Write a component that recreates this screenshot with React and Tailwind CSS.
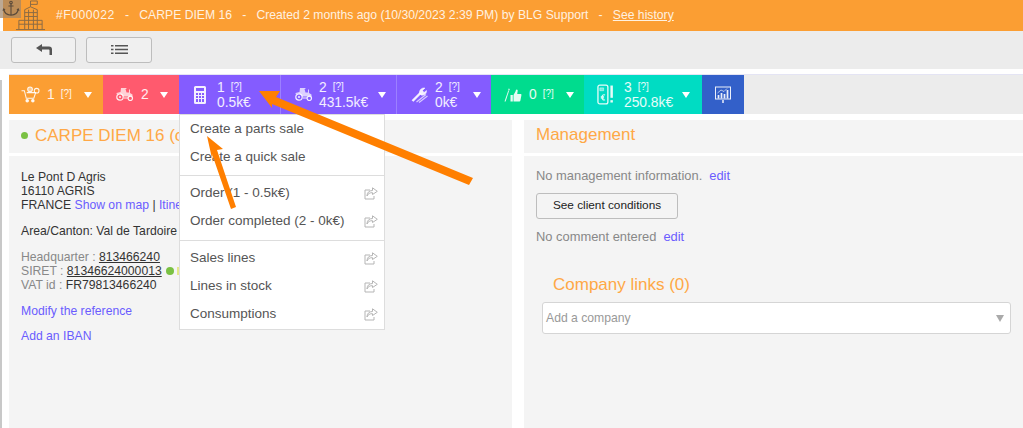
import { Fragment } from 'react'

const Building = ({ className }) => (
  <svg viewBox="0 0 32 32" fill="none" stroke="currentColor" strokeWidth="1" className={className}>
    <path d="M1 30.500h30M4 30V21h6M28 30V21h-5M10 30V10l6-3 7 3v20M10 13h13M10 17h13M10 21h13M10 25h13M14 10v20M19 10v20M4 25h6M23 25h5M16 7V1h7v3.500h-7" />
  </svg>
)

const Anchor = ({ className }) => (
  <svg viewBox="0 0 20 20" fill="none" stroke="currentColor" strokeWidth="1.300" className={className}>
    <circle cx="10" cy="3" r="1.500" />
    <path d="M10 4.500V18M7 7h6M1.500 11c.5 4 4 6.500 8.500 7 4.500-.5 8-3 8.500-7M.5 12.500l1-2 1.500 1.500M19.500 12.500l-1-2-1.500 1.500" />
  </svg>
)

const Cart = () => (
  <svg viewBox="0 0 20 18" fill="none" stroke="currentColor" strokeWidth="1.100" className="w-[19px] h-[17px]">
    <path d="M0.500 5h3l2 8h8l2-6H6" />
    <circle cx="6.500" cy="15.500" r="1.300" fill="currentColor" />
    <circle cx="12.500" cy="15.500" r="1.300" fill="currentColor" />
    <circle cx="9.500" cy="3.500" r="2.500" fill="currentColor" fillOpacity="0.500" />
    <circle cx="16.500" cy="5" r="2.500" />
  </svg>
)

const Tractor = () => (
  <svg viewBox="0 0 18 13" fill="currentColor" className="w-[18px] h-[13px]">
    <path d="M5 0h5l.8 1H9.500l1 3.500H13V1.500h1V5l2.500 1.500V8.500H7A3.800 3.800 0 0 0 .8 6.500L.5 5l4-1z" fillOpacity="0.800" />
    <circle cx="4" cy="9" r="3.200" fill="none" stroke="currentColor" strokeWidth="1.200" />
    <circle cx="4" cy="9" r="1" />
    <circle cx="14.300" cy="10.300" r="2.200" fill="none" stroke="currentColor" strokeWidth="1.200" />
    <path d="M8 9.500h4v1H8z" />
  </svg>
)

const Calculator = () => (
  <svg viewBox="0 0 12 18" className="w-[12px] h-[18px]" fill="currentColor">
    <path fillRule="evenodd" d="M1.500 0h9A1.500 1.500 0 0 1 12 1.500v15a1.500 1.500 0 0 1-1.500 1.500h-9A1.500 1.500 0 0 1 0 16.500v-15A1.500 1.500 0 0 1 1.500 0zM2 2v3h8V2zM2 7v2h2V7zm3 0v2h2V7zm3 0v2h2V7zM2 10v2h2v-2zm3 0v2h2v-2zm3 0v2h2v-2zM2 13v3h2v-3zm3 0v3h2v-3zm3 0v3h2v-3z" />
  </svg>
)

const Tools = () => (
  <svg viewBox="0 0 18 16" fill="none" stroke="currentColor" className="w-[18px] h-[16px]">
    <path d="M1.500 14 9.500 6" strokeWidth="2.400" />
    <path d="M8.500 6.500C8 3 10.500.5 14 1l-2.500 2.500 1.500 2L15.500 3.500c.5 3-2.500 5.500-5.500 4.500z" fill="currentColor" strokeWidth="0.500" />
    <path d="M5.500 15 15 7.500M8 15.500 16.500 9" strokeWidth="1.200" strokeOpacity="0.750" />
  </svg>
)

const Thumb = () => (
  <svg viewBox="0 0 18 14" fill="currentColor" className="w-[18px] h-[14px]">
    <path d="M0.500 13.500 4.300 2.500l.8.300L1.600 13.500z" />
    <path d="M4.600 0.500 5.800 1 5.300 2.600 4.300 2.200z" />
    <path d="M6.500 7h2.300v6.500H6.500zM9.500 7 11.500 3.500c.3-1 .4-2 1.200-2 1 0 1.200 1 .9 2.100L13.200 6H16.500c.8 0 1 .6.900 1.200L16.400 12.500c-.1.600-.5 1-1.100 1H9.500z" />
  </svg>
)

const Invoice = () => (
  <svg viewBox="0 0 18 22" fill="none" stroke="currentColor" className="w-[17px] h-[21px]">
    <rect x="1" y="1" width="10.500" height="20" rx="2" strokeWidth="1.400" />
    <path d="M3 4h4v3H3z" fill="currentColor" fillOpacity="0.500" strokeWidth="0.500" />
    <path d="M8.500 11.500c-2-.8-3.200.5-3.200 2.500s1.200 3.300 3.200 2.500M4 13.300h3.500M4 14.800h3.500" strokeWidth="1.100" />
    <path d="M15.500 1.500v13" strokeWidth="2.600" />
    <path d="M15.500 17v2.500" strokeWidth="2.600" />
  </svg>
)

const Chart = () => (
  <svg viewBox="0 0 16 18" fill="none" stroke="currentColor" className="w-[16px] h-[18px]">
    <rect x="0.500" y="1" width="15" height="12" strokeWidth="1" />
    <path d="M3.500 12.500V9M6.500 12.500V7M9.500 12.500V8M12.500 12.500V4" strokeWidth="1.700" />
    <path d="M2.500 7 6 4l3 1.500 3-3" strokeWidth="0.700" />
    <path d="M8 14v3" strokeWidth="1.500" />
  </svg>
)

const ShareIcon = () => (
  <svg viewBox="0 0 14 13" fill="none" stroke="#b5b5b5" strokeWidth="1" className="w-[14px] h-[13px]">
    <path d="M6 3H1v9h9V9" />
    <path d="M8.500 0.800 13.300 4.300 8.500 7.500V5.700C6 5.500 3.800 6.700 3 9c-.1-3.500 2.300-5.500 5.500-5.500z" fill="#ffffff" />
  </svg>
)

const Caret = () => (
  <span className="w-0 h-0 border-x-[4px] border-x-transparent border-t-[6px] border-t-white" />
)

const Help = () => <span className="text-[10px] ml-[6px] relative top-[-1px]">[?]</span>

const tabs = [
  { width: 'w-[94px]', color: 'bg-[#fb9e33]', pad: 'pl-[12px]', gap: 'gap-[7px]', icon: <Cart />, count: '1', help: true, caret: 'ml-[12px]' },
  { width: 'w-[76px]', color: 'bg-[#ff5a6e]', pad: 'pl-[13px]', gap: 'gap-[7px]', icon: <Tractor />, count: '2', caret: 'ml-[11px]' },
  { width: 'w-[102px]', color: 'bg-[#845cff] border-r border-[#9c80ff]', pad: 'pl-[15px]', gap: 'gap-[11px]', icon: <Calculator />, count: '1', help: true, amount: '0.5k€' },
  { width: 'w-[116px]', color: 'bg-[#845cff] border-r border-[#9c80ff]', pad: 'pl-[14px]', gap: 'gap-[6px]', icon: <Tractor />, count: '2', help: true, amount: '431.5k€', caret: 'ml-[10px]' },
  { width: 'w-[94px]', color: 'bg-[#845cff]', pad: 'pl-[14px]', gap: 'gap-[6px]', icon: <Tools />, count: '2', help: true, amount: '0k€', caret: 'ml-[13px]' },
  { width: 'w-[93px]', color: 'bg-[#00dc8e]', pad: 'pl-[13px]', gap: 'gap-[7px]', icon: <Thumb />, count: '0', help: true, caret: 'ml-[12px]' },
  { width: 'w-[118px]', color: 'bg-[#00dcc3]', pad: 'pl-[13px]', gap: 'gap-[10px]', icon: <Invoice />, count: '3', help: true, amount: '250.8k€', caret: 'ml-[9px]' },
]

const menuGroups = [
  [
    { label: 'Create a parts sale' },
    { label: 'Create a quick sale' },
  ],
  [
    { label: 'Order (1 - 0.5k€)', share: true },
    { label: 'Order completed (2 - 0k€)', share: true },
  ],
  [
    { label: 'Sales lines', share: true },
    { label: 'Lines in stock', share: true },
    { label: 'Consumptions', share: true },
  ],
]

const App = () => {
  return (
    <div className="relative w-[1023px] h-[428px] overflow-hidden bg-white font-['Liberation_Sans',Arial,sans-serif] text-[13px]">
      <div className="absolute left-0 top-[80px] w-[2px] h-[348px] bg-[#c8c8c8]" />

      {/* Top bar */}
      <div className="flex items-center h-[31px] ml-[3px] pl-[53px] bg-[#fb9e33] text-[#fff1e0] text-[12.200px] whitespace-pre">
        <span className="tracking-[0.5px]">#F000022</span>
        <span>   -   CARPE DIEM 16   -   Created 2 months ago (10/30/2023 2:39 PM) by BLG Support   -   </span>
        <span className="underline">See history</span>
      </div>
      <div className="absolute left-0 top-0 w-[21px] h-[18px] bg-[#a08566]/70" />
      <Anchor className="absolute left-[2px] top-0 w-[18px] h-[17px] text-[#5a4a3a]" />
      <Building className="absolute left-[15px] top-0 w-[31px] h-[31px] text-[#8a6a45]" />

      {/* Toolbar */}
      <div className="flex items-center gap-[10px] h-[38px] pl-[11px] pb-[1px] bg-[#ececec]">
        <button className="flex items-center justify-center w-[65px] h-[26px] border border-[#bdbdbd] rounded-[3px] bg-[#f0f0f0]">
          <svg viewBox="0 0 16 11" fill="#555" className="w-[16px] h-[11px]">
            <path d="M0 4 6 0v2.500h7c2 0 3 1.200 3 3V11h-2.500V6.500c0-.6-.4-1-1-1H6V8z" />
          </svg>
        </button>
        <button className="flex items-center justify-center w-[66px] h-[26px] border border-[#bdbdbd] rounded-[3px] bg-[#f0f0f0]">
          <svg viewBox="0 0 17 9" fill="#555" className="w-[17px] h-[9px]">
            <path d="M0 0h2.500v1.500H0zM4 0h13v1.500H4zM0 3.700h2.500v1.500H0zM4 3.700h13v1.500H4zM0 7.400h2.500v1.500H0zM4 7.400h13v1.500H4z" />
          </svg>
        </button>
      </div>

      {/* Tabs */}
      <div className="flex h-[40px] mt-[5px] ml-[9px] bg-[#ececec] border-t border-[#e4e4f4]">
        {tabs.map((tab, i) => (
          <div key={i} className={`flex items-center shrink-0 text-white/90 ${tab.width} ${tab.color} ${tab.pad} ${tab.gap}`}>
            {tab.icon}
            <div className="flex items-center">
              <div className="leading-[15px] text-[13.800px] whitespace-nowrap">
                <div className="flex items-center">{tab.count}{tab.help && <Help />}</div>
                {tab.amount && <div>{tab.amount}</div>}
              </div>
              {tab.caret && <span className={`flex ${tab.caret}`}><Caret /></span>}
            </div>
          </div>
        ))}
        <div className="flex items-center justify-center w-[42px] bg-[#3360c9] text-white/90">
          <Chart />
        </div>
      </div>

      {/* Panels */}
      <div className="flex gap-[12px] ml-[9px] mt-[6px]">
        <div className="w-[503px] shrink-0">
          <div className="flex items-center gap-[7px] h-[33px] pl-[12px] pb-[2px] bg-[#f4f4f4] text-[#ffa846] text-[17px] leading-none">
            <span className="w-[7px] h-[7px] rounded-full bg-[#7ac143]" />
            <span className="whitespace-nowrap">CARPE DIEM 16 (client)</span>
          </div>
          <div className="mt-[3px] h-[272px] pt-[14px] pl-[12px] bg-[#f4f4f4] text-[12.200px] leading-[14px] text-[#333]">
            <div>Le Pont D Agris</div>
            <div>16110 AGRIS</div>
            <div>FRANCE <span className="text-[#6a5cff]">Show on map</span> | <span className="text-[#6a5cff]">Itinerary</span></div>
            <div className="mt-[12px]">Area/Canton: Val de Tardoire</div>
            <div className="mt-[12px] text-[#888]">Headquarter : <span className="text-[#333] underline">813466240</span></div>
            <div className="flex items-center text-[#888]">
              <span>SIRET :&nbsp;</span>
              <span className="text-[#333] underline">81346624000013</span>
              <span className="ml-[4px] w-[8px] h-[8px] rounded-full bg-[#7ac143]" />
              <span className="ml-[3px] w-[8px] h-[8px] bg-[#e4e88a]" />
            </div>
            <div className="text-[#888]">VAT id : <span className="text-[#333]">FR79813466240</span></div>
            <div className="mt-[12px] text-[#6a5cff]">Modify the reference</div>
            <div className="mt-[11px] text-[#6a5cff]">Add an IBAN</div>
          </div>
        </div>

        <div className="flex-1 min-w-0">
          <div className="flex items-center h-[33px] pl-[12px] pb-[3px] bg-[#f4f4f4] text-[#ffa846] text-[17px]">Management</div>
          <div className="mt-[3px] h-[272px] pt-[13px] pl-[12px] bg-[#f4f4f4] text-[12.900px] text-[#888]">
            <div className="flex gap-[7px] leading-[14px]">
              <span>No management information.</span>
              <span className="text-[#6a5cff]">edit</span>
            </div>
            <button className="block mt-[10px] w-[142px] h-[26px] border border-[#bdbdbd] rounded-[3px] bg-[#f4f4f4] text-[11.800px] text-[#222]">
              See client conditions
            </button>
            <div className="flex gap-[7px] mt-[11px] leading-[14px]">
              <span>No comment entered</span>
              <span className="text-[#6a5cff]">edit</span>
            </div>
            <div className="mt-[31px] ml-[17px] text-[17px] leading-[20px] text-[#ffa846]">Company links (0)</div>
            <div className="flex items-center justify-between mt-[7px] ml-[6px] w-[469px] h-[32px] pl-[3px] pr-[6px] border border-[#d5d5d5] rounded-[3px] bg-white text-[12.200px] text-[#999]">
              <span>Add a company</span>
              <span className="w-0 h-0 border-x-[4px] border-x-transparent border-t-[7px] border-t-[#aaa]" />
            </div>
          </div>
        </div>
      </div>

      {/* Open dropdown */}
      <div className="absolute left-[179px] top-[114px] w-[206px] h-[216px] bg-white border border-[#dddddd] text-[13.500px] text-[#555]">
        {menuGroups.map((group, i) => (
          <div
            key={i}
            className={i === 0 ? '' : i === 1 ? 'mt-[4px] pt-[3px] border-t border-[#dddddd]' : 'mt-[5px] pt-[3px] border-t border-[#dddddd]'}
          >
            {group.map((item) => (
              <div key={item.label} className="flex items-center justify-between h-[28px] pl-[10px] pr-[6px]">
                <span>{item.label}</span>
                {item.share && <ShareIcon />}
              </div>
            ))}
          </div>
        ))}
      </div>

      {/* Annotation arrows */}
      <svg className="absolute left-0 top-0 w-[1023px] h-[428px] pointer-events-none" viewBox="0 0 1023 428" fill="#ff7f00">
        <polygon points="259,91 280,91 276,97 473,178 469,185 272,104 272,108" />
        <polygon points="207,136 223,149 217,150 236,207 231,209 212,154 213,163" />
      </svg>
    </div>
  )
}

export default App
